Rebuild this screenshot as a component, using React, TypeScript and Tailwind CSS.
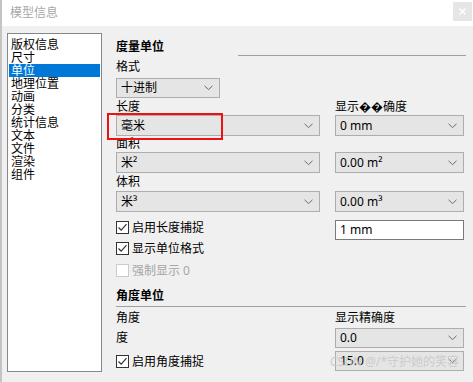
import { FC, ReactNode } from 'react';

const items = ['版权信息', '尺寸', '单位', '地理位置', '动画', '分类', '统计信息', '文本', '文件', '渲染', '组件'];

const Chevron: FC = () => (
  <svg width="9" height="6" viewBox="0 0 9 6" className="shrink-0">
    <path d="M0.5 0.8 L4.5 4.6 L8.5 0.8" fill="none" stroke="#6a6a6a" strokeWidth="1" />
  </svg>
);

const Select: FC<{ className: string; children: ReactNode }> = ({ className, children }) => (
  <div
    className={`flex items-center justify-between border border-[#adadad] bg-[#e5e5e5] pl-[4px] pr-[6px] text-[12px] leading-[14px] text-[#000] ${className}`}
  >
    <span>{children}</span>
    <Chevron />
  </div>
);

const Check: FC<{ label: string; checked?: boolean; disabled?: boolean }> = ({
  label,
  checked,
  disabled,
}) => (
  <div className="flex items-center gap-[3px] h-[13px]">
    <div
      className={`w-[13px] h-[13px] border flex items-center justify-center bg-white ${
        disabled ? 'border-[#cccccc]' : 'border-[#333333]'
      }`}
    >
      {checked && (
        <svg width="11" height="11" viewBox="0 0 11 11">
          <path d="M1.5 5.5 L4.2 8.2 L9.5 2.2" fill="none" stroke="#333" strokeWidth="1.2" />
        </svg>
      )}
    </div>
    <span className={`text-[12px] leading-[13px] ${disabled ? 'text-[#a6a6a6]' : 'text-black'}`}>
      {label}
    </span>
  </div>
);

const Label: FC<{ className?: string; children: ReactNode }> = ({ className = '', children }) => (
  <div className={`flex items-center text-[12px] leading-[14px] text-black ${className}`}>{children}</div>
);

export default function App() {
  return (
    <div className="relative w-[473px] h-[382px] overflow-hidden bg-[#f0f0f0] border-l-2 border-[#c4c4c4] font-['Noto_Sans','Noto_Sans_CJK_SC',sans-serif]">
      {/* title bar */}
      <div className="h-[26px] bg-white flex items-center justify-between pl-[8px] pr-[1px]">
        <span className="text-[12px] leading-none text-[#a8a8a8]">模型信息</span>
        <div className="w-[19px] h-[19px] -mt-[4px] bg-[#e6e6e6] flex items-center justify-center">
          <svg width="7" height="7" viewBox="0 0 7 7">
            <path d="M0.5 0.5 L6.5 6.5 M6.5 0.5 L0.5 6.5" stroke="#ffffff" strokeWidth="1.4" />
          </svg>
        </div>
      </div>

      <div className="flex pt-[7px] pl-[5px]">
        {/* list */}
        <div className="w-[95px] h-[339px] bg-white border border-[#828790] pt-[4px] px-[1px]">
          {items.map(it => (
            <div
              key={it}
              className={`h-[13px] pl-[2px] text-[12px] leading-[13px] ${
                it === '单位' ? 'bg-[#0078d7] text-white' : 'text-black'
              }`}
            >
              {it}
            </div>
          ))}
        </div>

        {/* settings */}
        <div className="ml-[14px] w-[350px] pt-[5px]">
          <Label className="h-[17px] font-bold">度量单位</Label>
          <div className="ml-[122px] w-[228px] h-px bg-[#a0a0a0]" />
          <Label className="h-[22px]">格式</Label>
          <Select className="w-[104px] h-[20px]">十进制</Select>

          <div className="flex h-[17px]">
            <Label className="w-[219px]">长度</Label>
            <Label>显示{'\uFFFD\uFFFD'}确度</Label>
          </div>
          <div className="flex h-[21px] gap-[15px]">
            <Select className="w-[204px] h-[21px]">毫米</Select>
            <Select className="w-[129px] h-[21px]">0 mm</Select>
          </div>

          <Label className="h-[16px]">面积</Label>
          <div className="flex h-[21px] gap-[15px]">
            <Select className="w-[204px] h-[21px]">米²</Select>
            <Select className="w-[129px] h-[21px]">0.00 m²</Select>
          </div>

          <Label className="h-[18px]">体积</Label>
          <div className="flex h-[21px] gap-[15px]">
            <Select className="w-[204px] h-[21px]">米³</Select>
            <Select className="w-[129px] h-[21px]">0.00 m³</Select>
          </div>

          <div className="flex mt-[8px] h-[20px]">
            <div className="w-[219px] pt-[1px]">
              <Check label="启用长度捕捉" checked />
            </div>
            <div className="w-[129px] h-[20px] bg-white border border-[#7a7a7a] flex items-center pl-[4px] text-[12px] leading-[14px] text-black">
              1 mm
            </div>
          </div>
          <div className="mt-[2px]">
            <Check label="显示单位格式" checked />
          </div>
          <div className="mt-[9px]">
            <Check label="强制显示 0" disabled />
          </div>

          <Label className="mt-[12px] h-[14px] font-bold">角度单位</Label>
          <div className="mt-[3px] w-[350px] h-px bg-[#a0a0a0]" />
          <div className="flex h-[21px]">
            <Label className="w-[219px]">角度</Label>
            <Label>显示精确度</Label>
          </div>
          <div className="flex h-[20px]">
            <Label className="w-[219px]">度</Label>
            <Select className="w-[129px] h-[20px]">0.0</Select>
          </div>
          <div className="flex h-[20px] mt-[3px] items-center">
            <div className="w-[219px]">
              <Check label="启用角度捕捉" checked />
            </div>
            <Select className="w-[129px] h-[20px]">15.0</Select>
          </div>
        </div>
      </div>

      {/* annotation */}
      <div className="absolute left-[105px] top-[113px] w-[116px] h-[27px] border-2 border-[#ee1111]" />
      {/* watermark */}
      <div className="absolute left-[328px] top-[355px] text-[12px] leading-[13px] text-[#c8c8c8]/90 whitespace-nowrap">
        CSDN @/*守护她的笑容
      </div>
    </div>
  );
}
